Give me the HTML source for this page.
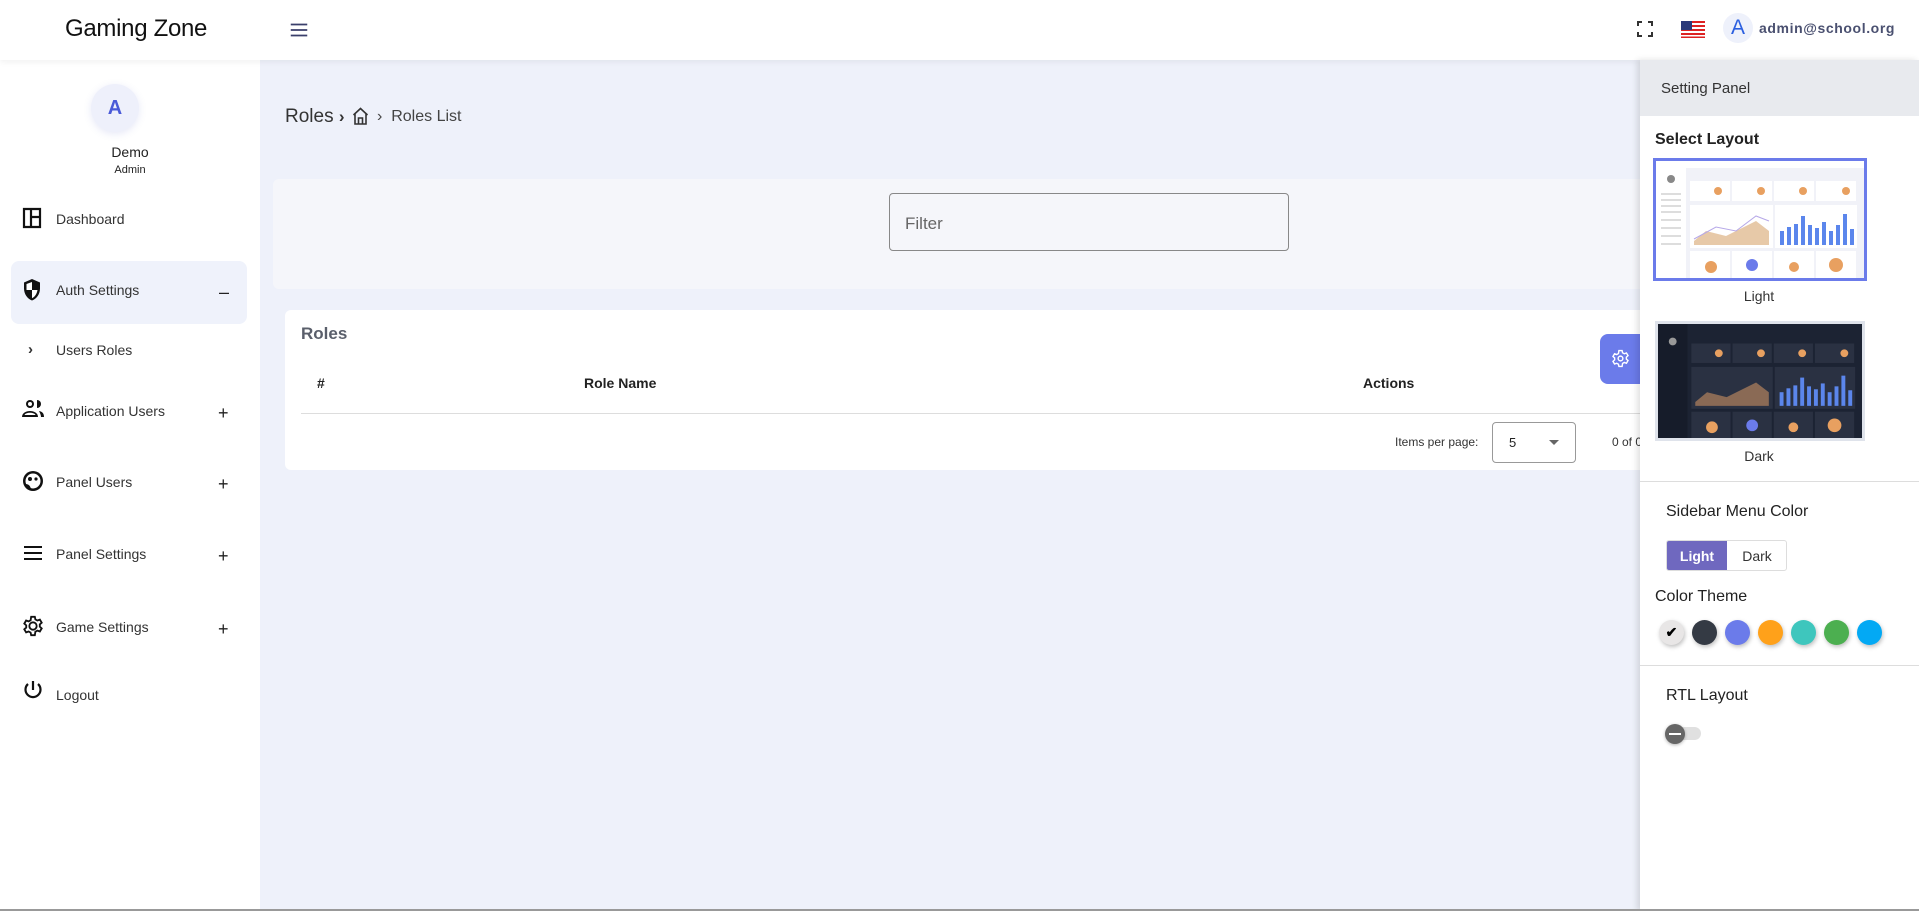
<!DOCTYPE html>
<html><head><meta charset="utf-8"><style>
*{box-sizing:border-box;margin:0;padding:0}
body{width:1919px;height:911px;overflow:hidden;font-family:"Liberation Sans",sans-serif;background:#eef1fa;position:relative;color:#222}
.abs{position:absolute}
#hdr{left:0;top:0;width:1919px;height:60px;background:#fff;box-shadow:0 2px 6px rgba(0,0,0,.06);z-index:3}
#side{left:0;top:60px;width:260px;height:851px;background:#fff;z-index:2}
.mi{position:absolute;left:0;width:260px;font-size:14px;color:#333}
.mi .t{position:absolute;left:56px;top:-8px}
.mi .ic{position:absolute;left:22px;top:-12px}
.mi .pm{position:absolute;left:218px;top:-8px;font-size:18px;color:#222}
#panel{left:1640px;top:60px;width:279px;height:851px;background:#fff;box-shadow:-3px 0 6px rgba(0,0,0,.12);z-index:4}
.card{background:#fff;border-radius:6px}
.dot{position:absolute;top:620px;width:25px;height:25px;border-radius:50%;box-shadow:1px 2px 4px rgba(0,0,0,.25)}
</style></head><body>
<div id="hdr" class="abs">
  <div class="abs" style="left:65px;top:15px;font-size:24px;color:#111;letter-spacing:-0.3px">Gaming Zone</div>
  <svg class="abs" style="left:288px;top:19px" width="22" height="22" viewBox="0 0 24 24"><path d="M3 6h18M3 12h18M3 18h18" stroke="#3a3f6b" stroke-width="2"/></svg>
  <svg class="abs" style="left:1637px;top:21px" width="16" height="16" viewBox="0 0 16 16" fill="none" stroke="#333" stroke-width="2"><path d="M1 5V1h4M11 1h4v4M15 11v4h-4M5 15H1v-4"/></svg>
  <svg class="abs" style="left:1681px;top:21px" width="24" height="17" viewBox="0 0 24 17"><rect width="24" height="17" rx="2" fill="#fff"/><g fill="#d22"><rect y="0" width="24" height="2"/><rect y="4" width="24" height="2"/><rect y="8" width="24" height="2"/><rect y="12" width="24" height="2"/><rect y="15.5" width="24" height="1.5"/></g><rect width="11" height="9" fill="#2a3a7a"/></svg>
  <div class="abs" style="left:1723px;top:13px;width:30px;height:30px;border-radius:50%;background:#eef1fb;color:#2b5fe0;font-size:21px;text-align:center;line-height:30px">A</div>
  <div class="abs" style="left:1759px;top:20px;font-size:14px;color:#4a5070;letter-spacing:0.6px;font-weight:bold">admin@school.org</div>
</div>
<div id="side" class="abs">
  <div class="abs" style="left:91px;top:24px;width:48px;height:48px;border-radius:50%;background:#eef0fb;box-shadow:0 2px 8px rgba(90,100,200,.15);color:#4a5ad8;font-size:20px;font-weight:bold;text-align:center;line-height:48px">A</div>
  <div class="abs" style="left:0;width:260px;top:84px;text-align:center;font-size:14px;color:#222">Demo</div>
  <div class="abs" style="left:0;width:260px;top:104px;text-align:center;font-size:11px;color:#222">Admin</div>
  <div class="mi" style="top:159px"><svg class="ic" width="20" height="22" viewBox="0 0 20 22"><path d="M2 2h16v18H2zM9 2v18M9 10h9" fill="none" stroke="#111" stroke-width="2.2"/></svg><span class="t">Dashboard</span></div>
  <div class="abs" style="left:11px;top:201px;width:236px;height:63px;background:#eff2fb;border-radius:8px"></div>
  <div class="mi" style="top:230px"><svg class="ic" width="20" height="24" viewBox="0 0 20 24"><path d="M10 1L2 4.5v6c0 5.5 3.5 10.5 8 12 4.5-1.5 8-6.5 8-12v-6z" fill="#111"/><path d="M10 4v8H4.5V6z M10 12h5.5c-.6 3.8-2.8 7-5.5 8.2z" fill="#fff"/></svg><span class="t">Auth Settings</span><span class="pm" style="left:219px">–</span></div>
  <div class="mi" style="top:290px"><span class="t" style="left:28px;top:-9px;font-size:15px;font-weight:bold">›</span><span class="t">Users Roles</span></div>
  <div class="mi" style="top:351px"><svg class="ic" width="22" height="20" viewBox="0 0 22 20"><circle cx="8" cy="5" r="4" fill="#111"/><circle cx="8" cy="5" r="2" fill="#fff"/><path d="M15 1a4 4 0 010 8z" fill="#111"/><path d="M0 18c0-4 4-6 8-6s8 2 8 6z" fill="#111"/><path d="M2.5 16c.5-1.5 3-2.3 5.5-2.3s5 .8 5.5 2.3z" fill="#fff"/><path d="M17 12c3 .5 5 2 5 6h-3c0-2-1-4-2-6z" fill="#111"/></svg><span class="t">Application Users</span><span class="pm">+</span></div>
  <div class="mi" style="top:422px"><svg class="ic" width="22" height="22" viewBox="0 0 22 22"><circle cx="11" cy="11" r="10" fill="#111"/><circle cx="11" cy="11" r="7.5" fill="#fff"/><circle cx="8" cy="9" r="2" fill="#111"/><circle cx="14" cy="9" r="1.6" fill="#111"/><path d="M3 14c3 0 5 1 6 5-3-.5-5-2.5-6-5z" fill="#111"/></svg><span class="t">Panel Users</span><span class="pm">+</span></div>
  <div class="mi" style="top:494px"><svg class="ic" width="22" height="22" viewBox="0 0 22 22"><path d="M2 5h18M2 11h18M2 17h18" stroke="#111" stroke-width="2"/></svg><span class="t">Panel Settings</span><span class="pm">+</span></div>
  <div class="mi" style="top:567px"><svg class="ic" width="22" height="22" viewBox="0 0 24 24"><path d="M12 8a4 4 0 100 8 4 4 0 000-8z M10 2h4l.6 2.8 2.2 1.2 2.7-1 2 3.4-2.1 1.9v2.4l2.1 1.9-2 3.4-2.7-1-2.2 1.2L14 22h-4l-.6-2.8-2.2-1.2-2.7 1-2-3.4 2.1-1.9V11.3L2.5 9.4l2-3.4 2.7 1 2.2-1.2z" fill="none" stroke="#111" stroke-width="2"/></svg><span class="t">Game Settings</span><span class="pm">+</span></div>
  <div class="mi" style="top:635px"><svg class="ic" style="top:-16px" width="22" height="22" viewBox="0 0 22 22"><path d="M11 2v9M6 5a7.5 7.5 0 1010 0" fill="none" stroke="#111" stroke-width="2.2"/></svg><span class="t">Logout</span></div>
</div>
<!-- main -->
<div class="abs" style="left:285px;top:106px;font-size:19px;color:#333">Roles <b style="font-size:17px">›</b></div>
<svg class="abs" style="left:352px;top:107px" width="17" height="18" viewBox="0 0 17 18" fill="none" stroke="#333" stroke-width="1.6"><path d="M1.5 8L8.5 1.5 15.5 8M3 7v10h11V7M6.5 17v-6h4v6"/></svg>
<div class="abs" style="left:377px;top:108px;font-size:16px;color:#444">›&nbsp;&nbsp;Roles List</div>
<div class="abs card" style="left:273px;top:179px;width:1400px;height:110px;background:#f5f6fa"></div>
<div class="abs" style="left:889px;top:193px;width:400px;height:58px;border:1px solid #888;border-radius:4px;background:#f5f6fa;font-size:17px;color:#666;padding:20px 0 0 15px">Filter</div>
<div class="abs card" style="left:285px;top:310px;width:1400px;height:160px"></div>
<div class="abs" style="left:301px;top:324px;font-size:17px;color:#5a5f6b;font-weight:bold">Roles</div>
<div class="abs" style="left:317px;top:375px;font-size:14px;font-weight:bold">#</div>
<div class="abs" style="left:584px;top:375px;font-size:14px;font-weight:bold">Role Name</div>
<div class="abs" style="left:1363px;top:375px;font-size:14px;font-weight:bold">Actions</div>
<div class="abs" style="left:301px;top:413px;width:1400px;height:1px;background:#ddd"></div>
<div class="abs" style="left:1395px;top:435px;font-size:12px;color:#333">Items per page:</div>
<div class="abs" style="left:1492px;top:422px;width:84px;height:41px;border:1px solid #999;border-radius:4px;font-size:13px;padding:12px 0 0 16px">5<span class="abs" style="left:56px;top:17px;border:5px solid transparent;border-top-color:#666"></span></div>
<div class="abs" style="left:1612px;top:435px;font-size:12px;color:#333">0 of 0</div>
<div class="abs" style="left:1600px;top:334px;width:50px;height:50px;background:#6b7bea;border-radius:8px;z-index:3"><svg class="abs" style="left:11px;top:15px" width="19" height="19" viewBox="0 0 24 24"><path d="M12 9a3 3 0 100 6 3 3 0 000-6z M10 2h4l.6 2.8 2.2 1.2 2.7-1 2 3.4-2.1 1.9v2.4l2.1 1.9-2 3.4-2.7-1-2.2 1.2L14 22h-4l-.6-2.8-2.2-1.2-2.7 1-2-3.4 2.1-1.9V11.3L2.5 9.4l2-3.4 2.7 1 2.2-1.2z" fill="none" stroke="#fff" stroke-width="1.8"/></svg></div>
<div class="abs" style="left:0;top:909px;width:1919px;height:2px;background:#999;z-index:5"></div>
<!-- panel -->
<div id="panel" class="abs">
  <div style="height:56px;background:#e8eaee;font-size:15px;color:#333;padding:20px 0 0 21px">Setting Panel</div>
  <div class="abs" style="left:15px;top:71px;font-size:16px;font-weight:bold;color:#222">Select Layout</div>
  <div class="abs" style="left:13px;top:98px;width:214px;height:123px;border:3px solid #6b7bea">
    <svg width="208" height="117" viewBox="0 0 208 117"><rect width="208" height="117" fill="#f1f2f8"/><rect width="30" height="117" fill="#fff"/><rect x="30" width="178" height="7" fill="#fff"/><circle cx="15" cy="18" r="4" fill="#888"/><g fill="#ddd"><rect x="5" y="32" width="20" height="2"/><rect x="5" y="38" width="20" height="2"/><rect x="5" y="44" width="20" height="2"/><rect x="5" y="50" width="20" height="2"/><rect x="5" y="58" width="20" height="2"/><rect x="5" y="66" width="20" height="2"/><rect x="5" y="74" width="20" height="2"/><rect x="5" y="82" width="20" height="2"/></g><g fill="#fff"><rect x="34" y="20" width="40" height="20"/><rect x="76" y="20" width="40" height="20"/><rect x="118" y="20" width="40" height="20"/><rect x="160" y="20" width="40" height="20"/><rect x="34" y="44" width="83" height="43"/><rect x="119" y="44" width="82" height="43"/><rect x="34" y="90" width="40" height="27"/><rect x="76" y="90" width="40" height="27"/><rect x="118" y="90" width="40" height="27"/><rect x="160" y="90" width="40" height="27"/></g><path d="M38 80L50 70 70 75 90 65 100 60 113 70V84H38z" fill="#e7c9a8"/><path d="M38 78L60 66 80 70 100 55 113 60" fill="none" stroke="#b6a8e8"/><g fill="#5b86ec"><rect x="124" y="70" width="4" height="14"/><rect x="131" y="66" width="4" height="18"/><rect x="138" y="63" width="4" height="21"/><rect x="145" y="55" width="4" height="29"/><rect x="152" y="64" width="4" height="20"/><rect x="159" y="67" width="4" height="17"/><rect x="166" y="61" width="4" height="23"/><rect x="173" y="70" width="4" height="14"/><rect x="180" y="64" width="4" height="20"/><rect x="187" y="53" width="4" height="31"/><rect x="194" y="68" width="4" height="16"/></g><g fill="#e8a060"><circle cx="62" cy="30" r="4"/><circle cx="105" cy="30" r="4"/><circle cx="147" cy="30" r="4"/><circle cx="190" cy="30" r="4"/><circle cx="55" cy="106" r="6"/><circle cx="96" cy="104" r="6" fill="#6b7bea"/><circle cx="138" cy="106" r="5"/><circle cx="180" cy="104" r="7"/></g></svg>
  </div>
  <div class="abs" style="left:0;width:238px;top:228px;text-align:center;font-size:14px;color:#333">Light</div>
  <div class="abs" style="left:15px;top:261px;width:210px;height:120px;border:3px solid #dfe3eb">
    <svg width="204" height="114" viewBox="0 0 208 117" preserveAspectRatio="none"><rect width="208" height="117" fill="#1c2333"/><rect width="30" height="117" fill="#161c2a"/><circle cx="15" cy="18" r="4" fill="#999"/><g fill="#2a3142"><rect x="34" y="20" width="40" height="20"/><rect x="76" y="20" width="40" height="20"/><rect x="118" y="20" width="40" height="20"/><rect x="160" y="20" width="40" height="20"/><rect x="34" y="44" width="83" height="43"/><rect x="119" y="44" width="82" height="43"/><rect x="34" y="90" width="40" height="27"/><rect x="76" y="90" width="40" height="27"/><rect x="118" y="90" width="40" height="27"/><rect x="160" y="90" width="40" height="27"/></g><path d="M38 80L50 70 70 75 90 65 100 60 113 70V84H38z" fill="#8a6a55"/><g fill="#5b86ec"><rect x="124" y="70" width="4" height="14"/><rect x="131" y="66" width="4" height="18"/><rect x="138" y="63" width="4" height="21"/><rect x="145" y="55" width="4" height="29"/><rect x="152" y="64" width="4" height="20"/><rect x="159" y="67" width="4" height="17"/><rect x="166" y="61" width="4" height="23"/><rect x="173" y="70" width="4" height="14"/><rect x="180" y="64" width="4" height="20"/><rect x="187" y="53" width="4" height="31"/><rect x="194" y="68" width="4" height="16"/></g><g fill="#e8a060"><circle cx="62" cy="30" r="4"/><circle cx="105" cy="30" r="4"/><circle cx="147" cy="30" r="4"/><circle cx="190" cy="30" r="4"/><circle cx="55" cy="106" r="6"/><circle cx="96" cy="104" r="6" fill="#6b7bea"/><circle cx="138" cy="106" r="5"/><circle cx="180" cy="104" r="7"/></g></svg>
  </div>
  <div class="abs" style="left:0;width:238px;top:388px;text-align:center;font-size:14px;color:#333">Dark</div>
  <div class="abs" style="left:0;top:421px;width:279px;height:1px;background:#ddd"></div>
  <div class="abs" style="left:26px;top:443px;font-size:16px;color:#222">Sidebar Menu Color</div>
  <div class="abs" style="left:26px;top:480px;width:121px;height:31px;border:1px solid #ddd;border-radius:3px;overflow:hidden;font-size:14px">
    <div class="abs" style="left:0;top:0;width:60px;height:31px;background:#6f68bf;color:#fff;text-align:center;line-height:30px;font-weight:bold">Light</div>
    <div class="abs" style="left:60px;top:0;width:60px;height:31px;color:#333;text-align:center;line-height:30px">Dark</div>
  </div>
  <div class="abs" style="left:15px;top:528px;font-size:16px;color:#222">Color Theme</div>
  <div class="dot" style="left:19px;top:560px;background:#e8e6e6;text-align:center;line-height:25px;font-size:14px;font-weight:bold;color:#000">✔</div>
  <div class="dot" style="left:52px;top:560px;background:#343a44"></div>
  <div class="dot" style="left:85px;top:560px;background:#6b7bea"></div>
  <div class="dot" style="left:118px;top:560px;background:#ffa11a"></div>
  <div class="dot" style="left:151px;top:560px;background:#3ec6bd"></div>
  <div class="dot" style="left:184px;top:560px;background:#4caf50"></div>
  <div class="dot" style="left:217px;top:560px;background:#03a9f4"></div>
  <div class="abs" style="left:0;top:605px;width:279px;height:1px;background:#ddd"></div>
  <div class="abs" style="left:26px;top:627px;font-size:16px;color:#222">RTL Layout</div>
  <div class="abs" style="left:29px;top:667px;width:32px;height:13px;border-radius:7px;background:#e0e0e0"></div>
  <div class="abs" style="left:25px;top:664px;width:20px;height:20px;border-radius:50%;background:#666;box-shadow:0 1px 3px rgba(0,0,0,.3)"><div class="abs" style="left:4px;top:9px;width:12px;height:2px;background:#fff"></div></div>
</div>
</body></html>
